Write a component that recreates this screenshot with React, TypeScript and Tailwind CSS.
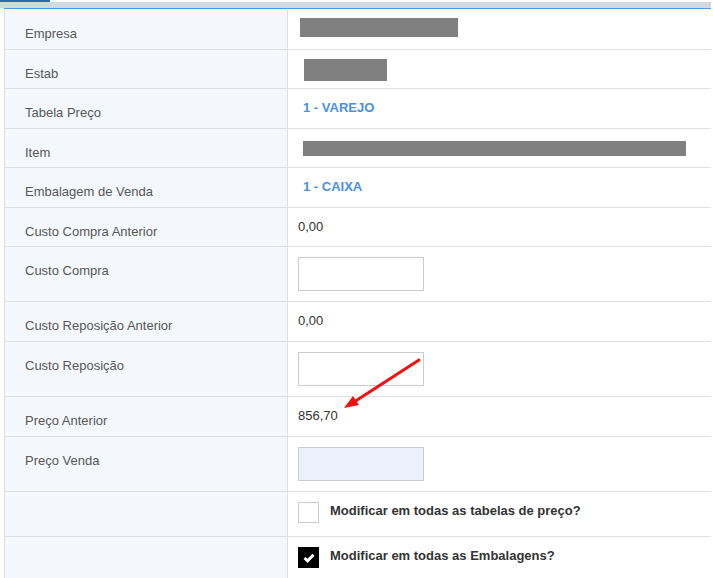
import React from "react";

type Row =
  | { label: string; kind: "box"; box: { ml: string; w: string; h: string; mt: string } ; h: string}
  | { label: string; kind: "link"; text: string; h: string }
  | { label: string; kind: "text"; text: string; h: string }
  | { label: string; kind: "input"; h: string; blue?: boolean }
  | { label: string; kind: "check"; text: string; checked: boolean; h: string };

const rows: Row[] = [
  { label: "Empresa", kind: "box", box: { ml: "ml-[12px]", w: "w-[158px]", h: "h-[19px]", mt: "mt-[8px]" }, h: "h-[40px]" },
  { label: "Estab", kind: "box", box: { ml: "ml-[16px]", w: "w-[83px]", h: "h-[22px]", mt: "mt-[9px]" }, h: "h-[39px]" },
  { label: "Tabela Preço", kind: "link", text: "1 - VAREJO", h: "h-[40px]" },
  { label: "Item", kind: "box", box: { ml: "ml-[15px]", w: "w-[383px]", h: "h-[15px]", mt: "mt-[12px]" }, h: "h-[39px]" },
  { label: "Embalagem de Venda", kind: "link", text: "1 - CAIXA", h: "h-[40px]" },
  { label: "Custo Compra Anterior", kind: "text", text: "0,00", h: "h-[39px]" },
  { label: "Custo Compra", kind: "input", h: "h-[55px]" },
  { label: "Custo Reposição Anterior", kind: "text", text: "0,00", h: "h-[40px]" },
  { label: "Custo Reposição", kind: "input", h: "h-[55px]" },
  { label: "Preço Anterior", kind: "text", text: "856,70", h: "h-[40px]" },
  { label: "Preço Venda", kind: "input", h: "h-[55px]", blue: true },
  { label: "", kind: "check", text: "Modificar em todas as tabelas de preço?", checked: false, h: "h-[45px]" },
  { label: "", kind: "check", text: "Modificar em todas as Embalagens?", checked: true, h: "h-[45px]" },
];

function Value({ r }: { r: Row }) {
  switch (r.kind) {
    case "box":
      return <div className={`${r.box.ml} ${r.box.w} ${r.box.h} ${r.box.mt} bg-[#808080]`} />;
    case "link":
      return (
        <div className="pl-[15px] pt-[11px] text-[13px] leading-[16px] font-bold text-[#4a8fe3]">{r.text}</div>
      );
    case "text":
      return <div className="pl-[10px] pt-[11px] text-[13px] leading-[16px] text-[#333]">{r.text}</div>;
    case "input":
      return (
        <div className="pl-[10px] pt-[10px]">
          <div
            className={`w-[126px] h-[34px] border border-[#cccccc] ${r.blue ? "bg-[#eaf1fb]" : "bg-white"}`}
          />
        </div>
      );
    case "check":
      return (
        <div className="pl-[10px] pt-[10px] flex items-start gap-[11px]">
          {r.checked ? (
            <div className="w-[21px] h-[21px] bg-black flex items-center justify-center">
              <svg width="12" height="10" viewBox="0 0 12 10">
                <path d="M1.5 5 L4.6 7.8 L10.5 1.8" stroke="white" strokeWidth="3" fill="none" />
              </svg>
            </div>
          ) : (
            <div className="w-[21px] h-[21px] border border-[#cccccc] bg-white" />
          )}
          <span className="mt-[1px] text-[13px] leading-[16px] font-bold text-[#333]">{r.text}</span>
        </div>
      );
  }
}

export default function App() {
  return (
    <div className="relative w-[713px] h-[578px] bg-white overflow-hidden font-['Liberation_Sans',Arial,sans-serif]">
      <div className="h-[2px] flex">
        <div className="w-[50px] bg-[#1f6fbf]" />
      </div>
      <div className="h-[6px] w-[711px] bg-[#d3d9e1]" />
      <div className="ml-[4px] w-[707px] h-px bg-[#4a9ae6]" />
      <div className="ml-[4px] w-[707px] pt-px border-l border-[#d9dee4]">
        {rows.map((r, i) => (
          <div key={i} className={`flex ${r.h} border-b border-[#dedfe1]`}>
            <div className="w-[283px] shrink-0 bg-[#f4f7fb] border-r border-[#dedfe1] pl-[20px] pt-[16px] text-[13px] leading-[16px] text-[#575757]">
              {r.label}
            </div>
            <div className="flex-1">
              <Value r={r} />
            </div>
          </div>
        ))}
      </div>
      <svg className="absolute left-0 top-0 pointer-events-none" width="713" height="578">
        <line x1="419" y1="360" x2="354" y2="402" stroke="#ee1111" strokeWidth="3" strokeLinecap="round" />
        <polygon points="344,408 353,396 359,405" fill="#ee1111" />
      </svg>
    </div>
  );
}
